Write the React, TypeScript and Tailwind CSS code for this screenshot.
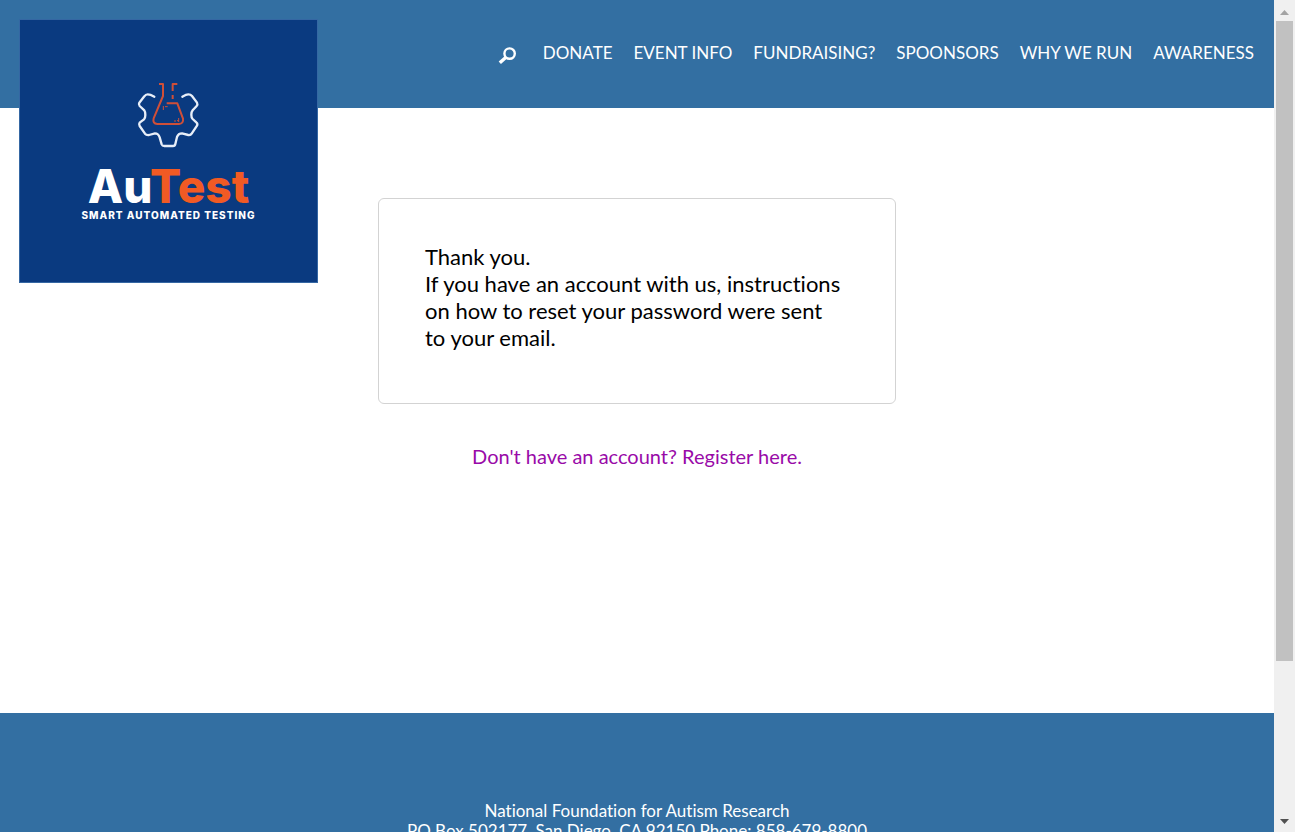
const navItems = ["DONATE", "EVENT INFO", "FUNDRAISING?", "SPOONSORS", "WHY WE RUN", "AWARENESS"];

function GearFlask() {
  return (
    <svg viewBox="-2 0 300 270" className="h-[90px] w-[100px]" fill="none" strokeWidth="7" strokeLinejoin="round" strokeLinecap="round" aria-hidden="true">
      <path
        stroke="#e8eef8"
        d="M104 80 Q92 73 84 73 Q78 73 74 79 L59 98 Q56 103 60 108 L74 121 Q77 125 77 135 Q77 144 73 148 L60 158 Q57 162 60 168 L76 191 Q80 196 88 195 L106 190 Q116 190 120 202 L126 223 Q128 228 134 228 L160 228 Q166 228 167 222 L172 201 Q176 190 187 190 L206 195 Q213 196 216 191 L232 167 Q235 161 230 157 L219 147 Q215 143 215 134 Q215 126 219 121 L231 108 Q235 104 232 98 L217 78 Q213 73 206 73 Q200 73 188 80"
      />
      <g stroke="#cf4f38" strokeWidth="6" strokeLinecap="butt">
        <path d="M118 42 H130 V78 L102 145 Q98 161 113 162 H178 Q192 161 190 146 L173 100 H141" />
        <path d="M173 42 H159 V63 M159 75 V87" />
        <path strokeWidth="3" d="M131 120 V108 M136 110 h8 M163 153 h6 M177 144 V156 M172 152 h5" />
      </g>
    </svg>
  );
}

function Logo() {
  return (
    <a
      href="#"
      className="absolute top-[19px] left-[19px] flex h-[264px] w-[299px] flex-col items-center border border-[#3567a3] bg-[#0a3a80] pt-[50px] font-['Inter',sans-serif]"
    >
      <GearFlask />
      <span className="mt-1.5 text-[46px] leading-10 font-extrabold text-white">
        Au<span className="text-[#f15a24]">Test</span>
      </span>
      <span className="text-[10px] leading-[18px] font-extrabold tracking-widest whitespace-nowrap text-white">
        SMART AUTOMATED TESTING
      </span>
    </a>
  );
}

function Header() {
  return (
    <header className="relative h-[108px] shrink-0 bg-[#336fa2]">
      <Logo />
      <nav className="flex items-center justify-end gap-[21px] pt-[41px] pr-5 text-[17px] leading-6 text-white">
        <button type="button" aria-label="Search" className="mr-1 flex h-6 w-5 items-end">
          <svg viewBox="0 0 20 20" className="size-5" fill="none" stroke="currentColor" aria-hidden="true">
            <circle cx="11.6" cy="8.6" r="5.2" strokeWidth="2.4" />
            <path d="M8 12.2 L1.8 17.8" strokeWidth="3.4" />
          </svg>
        </button>
        {navItems.map((item) => (
          <a key={item} href="#" className="whitespace-nowrap">
            {item}
          </a>
        ))}
      </nav>
    </header>
  );
}

function Scrollbar() {
  return (
    <div className="flex w-[21px] shrink-0 flex-col bg-[#f0f0f0] pr-[2px] pl-[2px]" aria-hidden="true">
      <div className="flex h-[21px] shrink-0 items-center justify-center">
        <svg viewBox="0 0 9 5" className="mt-1 h-[5px] w-[9px]" fill="#a3a3a3">
          <path d="M4.5 0 L9 5 H0 Z" />
        </svg>
      </div>
      <div className="grow">
        <div className="h-[81%] bg-[#c1c1c1]" />
      </div>
      <div className="flex h-[21px] shrink-0 items-center justify-center">
        <svg viewBox="0 0 9 5" className="h-[5px] w-[9px]" fill="#505050">
          <path d="M0 0 H9 L4.5 5 Z" />
        </svg>
      </div>
    </div>
  );
}

export default function App() {
  return (
    <div className="flex h-screen overflow-hidden bg-white font-['Lato',sans-serif] [font-variant-ligatures:no-common-ligatures]">
      <div className="flex min-w-0 flex-1 flex-col overflow-hidden">
        <Header />
        <main className="flex min-h-[605px] shrink-0 flex-col items-center pt-[90px]">
          <section className="w-full max-w-[518px] rounded-md border border-[#d3d3d3] pt-11 pr-[50px] pb-[52px] pl-[46px]">
            <p className="text-[22px] leading-[27px] text-black">
              Thank you.
              <br />
              If you have an account with us, instructions on how to reset your password were sent to your email.
            </p>
          </section>
          <a href="#" className="mt-10 text-xl leading-6 text-[#990aa8]">
            Don't have an account? Register here.
          </a>
        </main>
        <footer className="shrink-0 bg-[#336fa2] pt-[88px] pb-20 text-center text-[17px] leading-5 text-white">
          <p>National Foundation for Autism Research</p>
          <p>PO Box 502177, San Diego, CA 92150 Phone: 858-679-8800</p>
        </footer>
      </div>
      <Scrollbar />
    </div>
  );
}
